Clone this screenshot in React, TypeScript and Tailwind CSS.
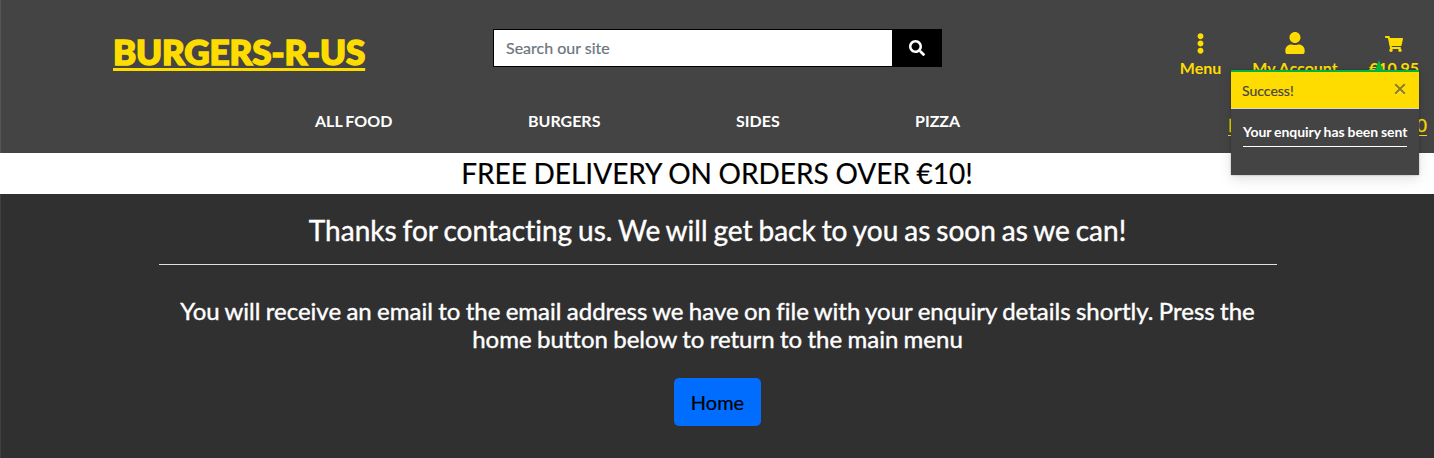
import React from "react";
import { FaEllipsisV, FaUser, FaShoppingCart, FaSearch } from "react-icons/fa";

const categories = [
  { label: "ALL FOOD", cell: "w-[213px]" },
  { label: "BURGERS", cell: "w-[208px]" },
  { label: "SIDES", cell: "w-[179px]" },
  { label: "PIZZA", cell: "w-[60px]" },
];

function Toast() {
  return (
    <div className="absolute left-[1231px] top-[70px] z-10 w-[188px] shadow-[0_4px_12px_rgba(0,0,0,0.12),0_0_2px_rgba(0,0,0,0.3)]">
      <svg className="absolute -top-[10px] left-[142px] h-[10px] w-[12px]" viewBox="0 0 12 10">
        <path d="M6 0L10 10H2Z" fill="#00b33c" />
      </svg>
      <div className="flex h-[39px] items-start justify-between border-b border-t-2 border-b-[#d8d8d8] border-t-[#00b33c] bg-[#ffdc00] px-[11px]">
        <span className="pt-[8px] text-[14px] leading-[21px] text-[#444444] [-webkit-text-stroke:0.2px_#444444]">Success!</span>
        <svg className="mr-[2px] mt-[11px] h-3 w-3" viewBox="0 0 12 12" fill="none">
          <path d="M1.5 2.5L10.5 11.5M10.5 2.5L1.5 11.5" stroke="#fff3a0" strokeWidth="1.6" />
          <path d="M1.2 1.2L10.8 10.8M10.8 1.2L1.2 10.8" stroke="#8f7f1c" strokeWidth="2.1" />
        </svg>
      </div>
      <div className="h-[66px] bg-[#444444] px-3 pt-3">
        <p className="h-[26px] whitespace-nowrap border-b border-white text-[14px] font-bold leading-[21px] tracking-[-0.06px] text-white [word-spacing:-0.4px]">
          Your enquiry has been sent
        </p>
      </div>
    </div>
  );
}

export default function App() {
  return (
    <div className="relative flex h-[458px] w-[1434px] flex-col overflow-hidden bg-[#303030] font-['Lato',sans-serif]">
      <header className="h-[153px] shrink-0 border-l border-[#555555] bg-[#444444]">
        <div className="flex h-[100px]">
          <div className="w-[492px] shrink-0 pl-[112px] pt-[28px]">
            <a className="whitespace-nowrap text-[35px] font-black leading-[46px] tracking-[-0.1px] text-[#ffdc00] underline decoration-[3px] underline-offset-[3px] [-webkit-text-stroke:1.6px_#ffdc00] [text-decoration-skip-ink:none]">
              BURGERS-R-US
            </a>
          </div>
          <div className="mt-[29px] flex h-[38px] w-[449px] shrink-0">
            <div className="flex h-full w-[399px] items-center border border-r-0 border-black bg-white pl-3 text-[16px] text-[#6c757d] [-webkit-text-stroke:0.2px_#6c757d]">
              Search our site
            </div>
            <button className="flex h-full w-[50px] items-center justify-center bg-black pr-[1px] text-white">
              <FaSearch size={16} />
            </button>
          </div>
          <nav className="ml-[223px] flex shrink-0 pt-[32px] text-[#ffdc00]">
            <a className="flex w-[71px] flex-col items-center pt-[1px]">
              <FaEllipsisV size={21} />
              <span className="mt-[2px] whitespace-nowrap text-[16px] font-bold leading-6">Menu</span>
            </a>
            <a className="flex w-[118px] flex-col items-center">
              <FaUser size={22} />
              <span className="mt-[2px] whitespace-nowrap text-[16px] font-bold leading-6">My Account</span>
            </a>
            <a className="flex w-[80px] flex-col items-center pt-[3px]">
              <FaShoppingCart size={18} />
              <span className="mt-[3px] whitespace-nowrap text-[16px] font-bold leading-6">€10.95</span>
            </a>
          </nav>
        </div>
        <div className="flex h-[53px] justify-between pl-[314px] pr-[7px]">
          <nav className="flex pt-[9px] text-[16px] font-bold leading-6 text-white [word-spacing:-0.8px]">
            {categories.map((c) => (
              <a key={c.label} className={c.cell}>{c.label}</a>
            ))}
          </nav>
          <a className="flex w-[199px] justify-between whitespace-nowrap pt-[13px] text-[18px] leading-6 text-[#ffdc00] underline underline-offset-[3px] [-webkit-text-stroke:0.3px_#ffdc00]">
            DEALS UNDER <span>€10</span>
          </a>
        </div>
      </header>
      <div className="h-[41px] shrink-0 bg-white text-center text-[28px] leading-[41px] text-black [-webkit-text-stroke:0.2px_#000] [word-spacing:-0.5px]">
        FREE DELIVERY ON ORDERS OVER €10!
      </div>
      <main className="flex grow flex-col items-center border-l border-[#404040] text-white">
        <h1 className="mt-[19px] whitespace-nowrap text-[28px] leading-[34px] [-webkit-text-stroke:0.4px_#fff] [font-variant-ligatures:none] [word-spacing:-1.2px]">
          Thanks for contacting us. We will get back to you as soon as we can!
        </h1>
        <hr className="mt-[17px] w-[1118px] border-t border-[#e0e0e0]" />
        <p className="mt-[32px] whitespace-nowrap text-center text-[24px] leading-[28px] [-webkit-text-stroke:0.4px_#fff] [font-variant-ligatures:none] [word-spacing:-0.8px]">
          You will receive an email to the email address we have on file with your enquiry details shortly. Press the
          <br />
          home button below to return to the main menu
        </p>
        <button className="mt-[25px] h-[48px] w-[87px] rounded-[5px] bg-[#006dff] text-[20px] leading-[30px] text-black [-webkit-text-stroke:0.2px_#000]">
          Home
        </button>
      </main>
      <Toast />
    </div>
  );
}
